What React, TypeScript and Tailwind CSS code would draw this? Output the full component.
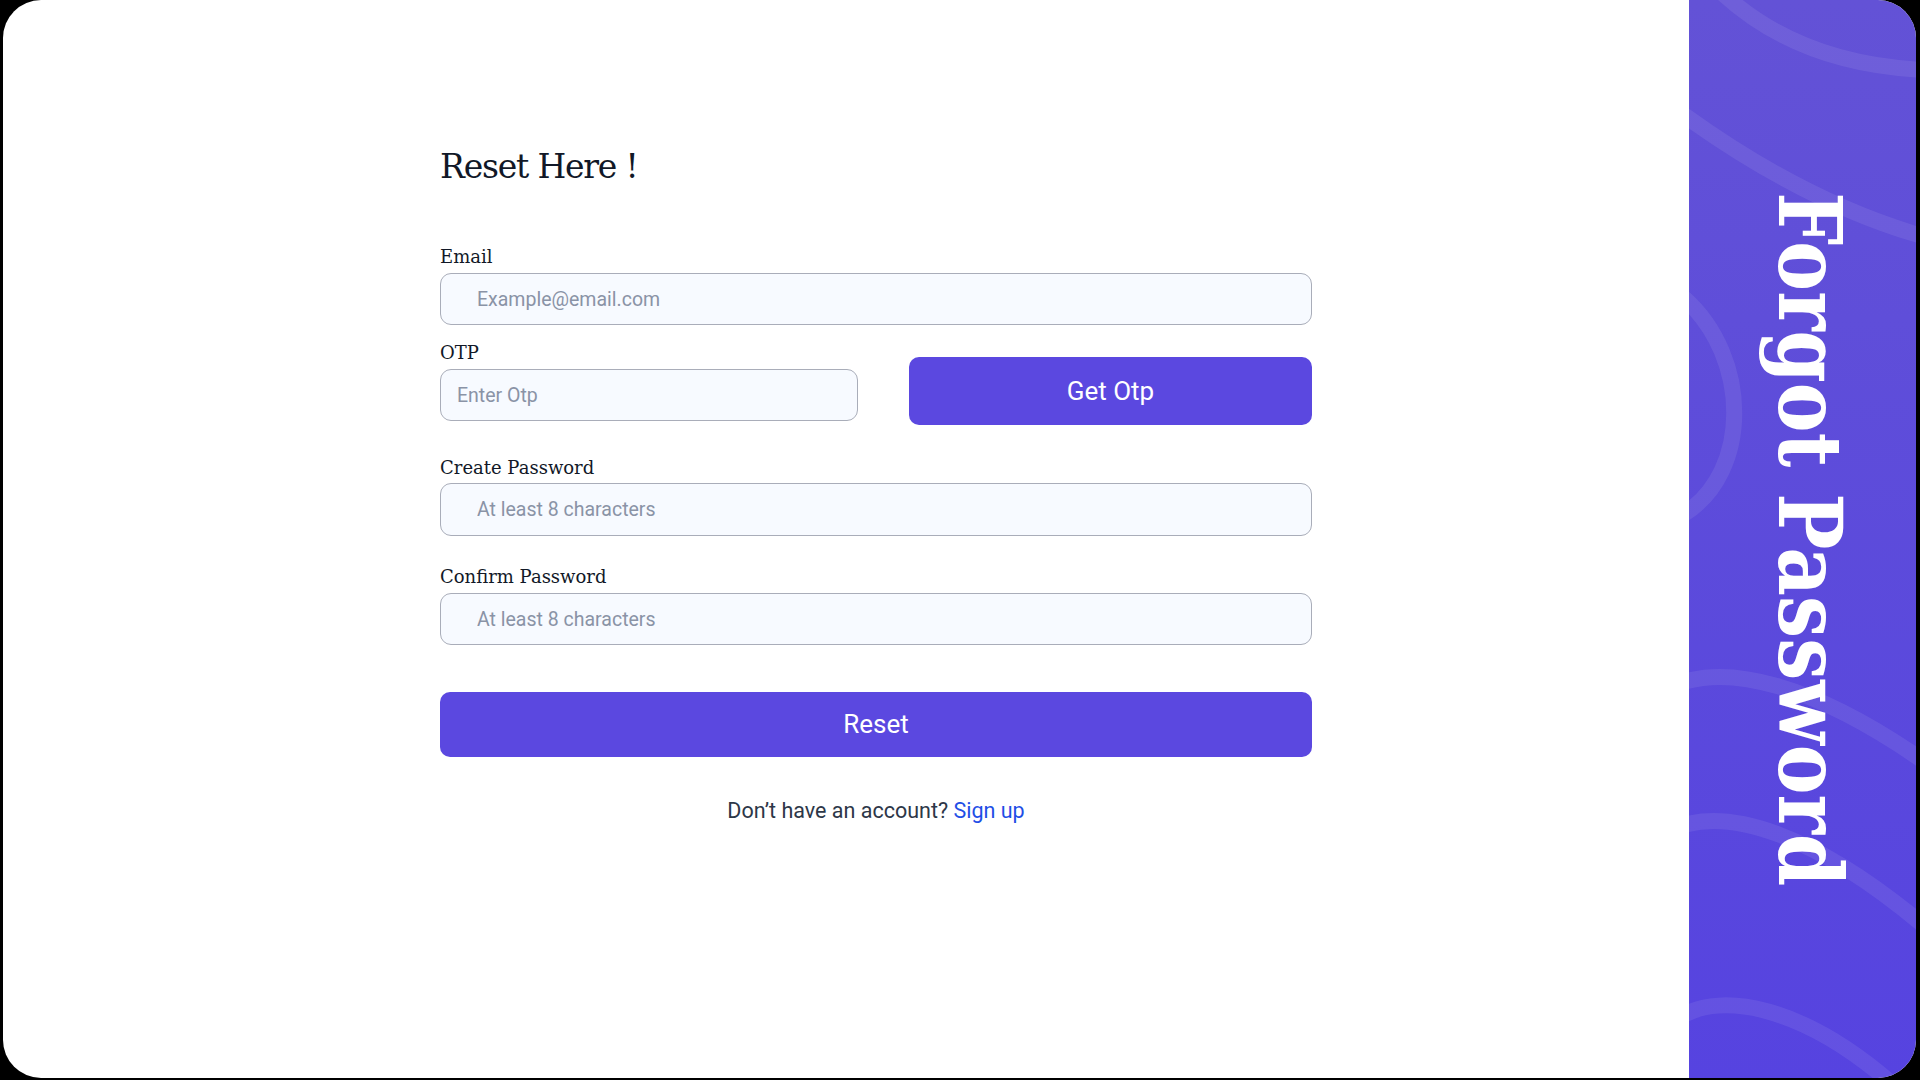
import React from 'react';

const slab = "font-['DejaVu_Serif',serif]";
const sans = "font-['Roboto','Liberation_Sans',sans-serif]";

const Field = ({ label, placeholder, type = 'text', top, inputTop, h = 'h-[52px]' }: {
  label: string;
  placeholder: string;
  type?: string;
  top: string;
  inputTop: string;
  h?: string;
}) => (
  <div className={top}>
    <label className={`${slab} block text-[18px] leading-[20px] text-[#111827]`}>{label}</label>
    <input
      type={type}
      placeholder={placeholder}
      className={`${sans} ${inputTop} ${h} block w-full rounded-[11px] border border-[#a9adb9] bg-[#f7faff] pl-[36px] text-[19.5px] text-gray-800 placeholder:text-[#8a93a6] outline-none`}
    />
  </div>
);

const Waves = () => (
  <svg className="absolute inset-0 h-full w-full" viewBox="0 0 227 1078" preserveAspectRatio="none" fill="none">
    <g stroke="#ffffff" strokeOpacity="0.08" strokeWidth="16">
      <path d="M 30 -10 Q 110 66 240 70" />
      <path d="M -5 115 Q 120 205 240 238" />
      <path d="M -5 298 C 62 358, 62 472, -5 514" />
      <path d="M -5 682 C 40 668, 120 680, 240 765" />
      <path d="M -5 825 C 40 812, 120 828, 240 930" />
      <path d="M -5 1015 C 30 995, 110 1000, 210 1090" />
    </g>
  </svg>
);

export default function App() {
  return (
    <div className="h-screen w-full bg-black">
      <div className="ml-[3px] mr-[4px] flex h-[1078px] overflow-hidden rounded-[38px] bg-white">
        <main className="flex-1 pl-[437px]">
          <form className="w-[872px]" onSubmit={(e) => e.preventDefault()}>
            <h1 className={`${slab} mt-[147px] text-[33px] leading-[40px] tracking-[-1.2px] text-[#111827]`}>Reset Here !</h1>

            <Field label="Email" placeholder="Example@email.com" type="email" top="mt-[60px]" inputTop="mt-[6px]" />

            <div className="mt-[18px] flex items-start gap-[51px]">
              <div className="w-[418px]">
                <label className={`${slab} block text-[18px] leading-[20px] text-[#111827]`}>OTP</label>
                <input
                  placeholder="Enter Otp"
                  className={`${sans} mt-[6px] block h-[52px] w-full rounded-[11px] border border-[#a9adb9] bg-[#f7faff] pl-[16px] text-[19.5px] placeholder:text-[#8a93a6] outline-none`}
                />
              </div>
              <button
                type="button"
                className={`${sans} mt-[14px] h-[68px] flex-1 rounded-[10px] bg-[#5b48e0] text-[26px] text-white`}
              >
                Get Otp
              </button>
            </div>

            <Field label="Create Password" placeholder="At least 8 characters" type="password" top="mt-[33px]" inputTop="mt-[5px]" h="h-[53px]" />
            <Field label="Confirm Password" placeholder="At least 8 characters" type="password" top="mt-[31px]" inputTop="mt-[6px]" />

            <button
              type="submit"
              className={`${sans} mt-[47px] block h-[65px] w-full rounded-[10px] bg-[#5b48e0] text-[26px] text-white`}
            >
              Reset
            </button>

            <p className={`${sans} mt-[40px] text-center text-[21.5px] leading-[28px] text-[#2d3748]`}>
              Don’t have an account? <a href="#" className="text-[#1f4fe6]">Sign up</a>
            </p>
          </form>
        </main>

        <aside className="relative flex w-[227px] shrink-0 items-center justify-center bg-gradient-to-b from-[#6352d6] to-[#5643e0]">
          <Waves />
          <span className={`${slab} relative ml-[14px] scale-y-[0.85] text-[88px] font-bold leading-none text-white [writing-mode:vertical-rl]`}>
            Forgot Password
          </span>
        </aside>
      </div>
    </div>
  );
}
